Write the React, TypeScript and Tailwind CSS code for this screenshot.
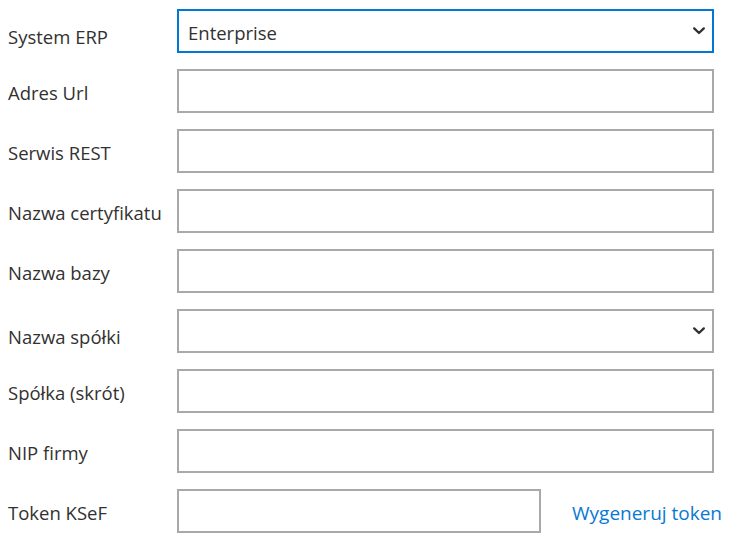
import type { ReactNode } from "react";

type Field = {
  label: string;
  kind: "text" | "select";
  value?: string;
  focused?: boolean;
};

const FIELDS: Field[] = [
  { label: "System ERP", kind: "select", value: "Enterprise", focused: true },
  { label: "Adres Url", kind: "text" },
  { label: "Serwis REST", kind: "text" },
  { label: "Nazwa certyfikatu", kind: "text" },
  { label: "Nazwa bazy", kind: "text" },
  { label: "Nazwa spółki", kind: "select" },
  { label: "Spółka (skrót)", kind: "text" },
  { label: "NIP firmy", kind: "text" },
];

function Chevron() {
  return (
    <svg width="12" height="8" viewBox="0 0 12 8" className="shrink-0 text-[#323130]">
      <polyline points="1.2,1.4 6,6 10.8,1.4" fill="none" stroke="currentColor" strokeWidth="2.3" strokeLinecap="round" strokeLinejoin="round" />
    </svg>
  );
}

function Box({ field }: { field: Field }) {
  const border = field.focused ? "border-[#0078d4]" : "border-[#a9a9ab]";
  return (
    <div className={`flex h-[44px] w-[537px] items-center border-2 ${border} bg-white pl-[9px] pr-[7px]`}>
      <span className="flex-1 pt-[4px] text-[#323130]">{field.value ?? ""}</span>
      {field.kind === "select" && <Chevron />}
    </div>
  );
}

function Row({ label, select, children }: { label: string; select?: boolean; children: ReactNode }) {
  return (
    <div className="flex items-start">
      <div className={`w-[169px] shrink-0 text-[#323130] ${select ? "pt-[16px]" : "pt-[12px]"}`}>{label}</div>
      {children}
    </div>
  );
}

export default function App() {
  return (
    <div
      className="flex h-[544px] w-[736px] flex-col gap-4 bg-white pl-[8px] pt-[9px] text-[18.5px] leading-[24px]"
      style={{ fontFamily: '"Open Sans", "Noto Sans", sans-serif' }}
    >
      {FIELDS.map((field) => (
        <Row key={field.label} label={field.label} select={field.kind === "select"}>
          <Box field={field} />
        </Row>
      ))}
      <Row label="Token KSeF">
        <div className="h-[44px] w-[364px] border-2 border-[#a9a9ab] bg-white" />
        <a className="ml-[31px] pt-[12px] text-[19px] text-[#0a78d4]" href="#">
          Wygeneruj token
        </a>
      </Row>
    </div>
  );
}
